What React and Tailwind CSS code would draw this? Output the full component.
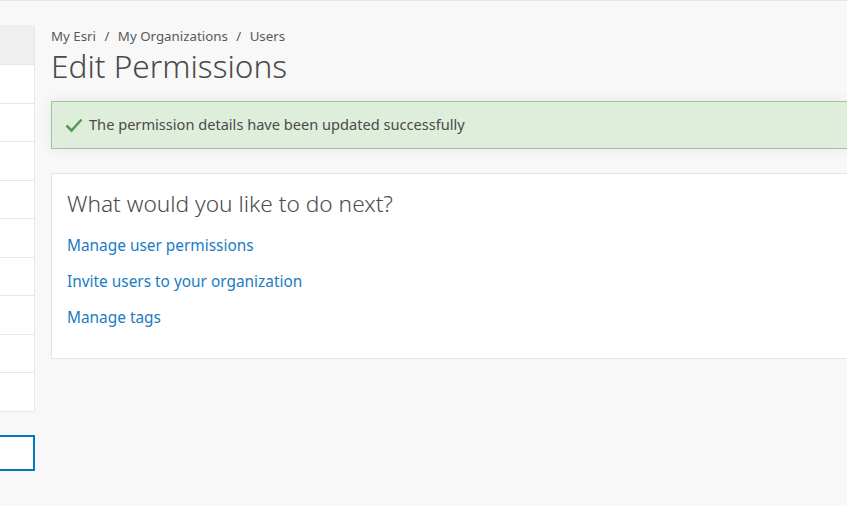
import React from 'react';

const sideRows = [0, 1, 2, 3, 4, 5, 6, 7, 8];

const links = [
  'Manage user permissions',
  'Invite users to your organization',
  'Manage tags',
];

const CheckIcon = () => (
  <svg width="20" height="16" viewBox="0 0 20 16" className="shrink-0">
    <path d="M2.5 8.5 L7.5 13.5 L17.5 2.5" fill="none" stroke="#5a9a58" strokeWidth="2.6" />
  </svg>
);

const App = () => {
  return (
    <div
      className="w-[847px] h-[506px] overflow-hidden bg-[#f8f8f8] border-t border-[#e6e6e6] flex"
      style={{ fontFamily: '"Noto Sans", Lato, sans-serif' }}
    >
      {/* side menu, scrolled off to the left */}
      <div className="w-[35px] shrink-0 pt-[24px] flex flex-col">
        <div className="border-r border-[#e8e8e8]">
          <div className="h-[39px] bg-[#efefef]" />
          {sideRows.map((i) => (
            <div key={i} className="h-[38.5px] bg-white border-t border-[#e8e8e8]" />
          ))}
          <div className="border-b border-[#e8e8e8]" />
        </div>
        <div className="mt-[23px] h-[36px] bg-white border-2 border-l-0 border-[#0079c1]" />
      </div>

      <div className="flex-1 ml-[16px] pt-[25px] min-w-0">
        <div className="text-[13.3px] text-[#595959] leading-[20px]">
          My Esri <span className="mx-[5px]">/</span> My Organizations <span className="mx-[5px]">/</span> Users
        </div>
        <h1 className="text-[31.6px] font-light text-[#4a4a4a] leading-[38px] mt-[1px]">Edit Permissions</h1>

        <div className="mt-[16px] h-[48px] flex items-center gap-[5px] pl-[12px] bg-[#dfeedb] border border-r-0 border-[#9cc59a] shadow-[0_0_14px_rgba(0,0,0,0.07)]">
          <CheckIcon />
          <span className="text-[14.6px] text-[#4a4a4a]">The permission details have been updated successfully</span>
        </div>

        <div className="mt-[24px] h-[186px] bg-white border border-r-0 border-[#e6e6e6] pl-[15px] pt-[15px]">
          <h2 className="text-[22.7px] font-light text-[#4c4c4c] leading-[30px]">What would you like to do next?</h2>
          <div className="mt-[16px] flex flex-col gap-[14px]">
            {links.map((label) => (
              <a key={label} href="#" className="text-[15.4px] leading-[22px] text-[#1a7bc4]">
                {label}
              </a>
            ))}
          </div>
        </div>
      </div>
    </div>
  );
};

export default App;
